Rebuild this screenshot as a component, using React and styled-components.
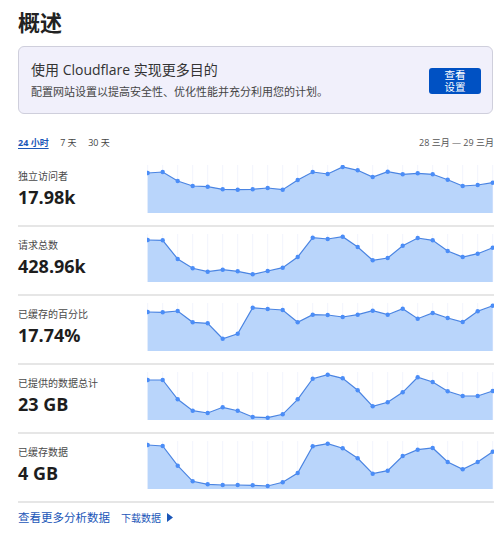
import React from 'react';
import styled, { createGlobalStyle } from 'styled-components';

const GlobalStyle = createGlobalStyle`
  body {
    margin: 0;
    padding: 0;
    background: #fff;
    font-family: "Open Sans", "Noto Sans CJK SC", sans-serif;
  }
`;

const Page = styled.div`
  width: 476px;
  padding: 8px 0 0 18px;
`;

const Title = styled.h1`
  margin: 0;
  font-size: 22px;
  line-height: 28px;
  font-weight: 700;
  color: #222;
`;

const Card = styled.div`
  display: flex;
  align-items: center;
  justify-content: space-between;
  box-sizing: border-box;
  width: 475px;
  height: 68px;
  margin-top: 10px;
  padding: 0 11px 0 12px;
  border: 1px solid #cfcfdc;
  border-radius: 6px;
  background-color: #f1f0fb;
`;

const CardText = styled.div`
  display: flex;
  flex-direction: column;
  gap: 4px;
`;

const CardHeading = styled.div`
  font-size: 14px;
  line-height: 20px;
  color: #333;
`;

const CardSub = styled.div`
  font-size: 11px;
  line-height: 16px;
  color: #444;
`;

const CardButton = styled.button`
  display: flex;
  flex-direction: column;
  align-items: center;
  justify-content: center;
  width: 52px;
  height: 26px;
  margin-top: 2px;
  padding: 0;
  border: none;
  border-radius: 3px;
  background-color: #0051c3;
  color: #fff;
  font-family: inherit;
  font-size: 10.5px;
  line-height: 12.5px;
`;

const Toolbar = styled.div`
  display: flex;
  align-items: center;
  justify-content: space-between;
  margin-top: 22px;
  height: 14px;
  line-height: 14px;
`;

const Tabs = styled.div`
  display: flex;
  gap: 11.5px;
`;

const Tab = styled.a`
  font-size: 9px;
  font-weight: ${(p) => (p.$active ? 700 : 400)};
  color: ${(p) => (p.$active ? '#1a56b8' : '#444')};
  text-decoration: ${(p) => (p.$active ? 'underline' : 'none')};
  text-underline-offset: 2px;
  cursor: pointer;
`;

const DateRange = styled.span`
  font-size: 9px;
  color: #555;
`;

const Rows = styled.div`
  margin-top: 8px;
`;

const Row = styled.div`
  display: grid;
  grid-template-columns: 129px 347px;
  height: 67px;
  border-bottom: 2px solid #e6e6e6;
`;

const Info = styled.div`
  display: flex;
  flex-direction: column;
  padding-top: 10px;
`;

const Label = styled.div`
  font-size: 10px;
  line-height: 16px;
  color: #4a4a4a;
`;

const Value = styled.div`
  margin-top: 1px;
  font-size: 18px;
  line-height: 24px;
  font-weight: 700;
  color: #1d1d1d;
`;

const ChartBox = styled.svg`
  display: block;
  margin-top: 7px;
`;

const Footer = styled.div`
  display: flex;
  align-items: center;
  gap: 11px;
  margin-top: 6px;
  height: 16px;
`;

const MoreLink = styled.a`
  font-size: 11.5px;
  color: #1a56b8;
  text-decoration: underline;
  text-underline-offset: 3px;
`;

const Download = styled.a`
  display: flex;
  align-items: center;
  gap: 6px;
  font-size: 10px;
  color: #1a56b8;
`;

const H = 48;

const Chart = ({ data }) => {
  const pts = data.map((h, i) => [0.7 + i * 15, H - h]);
  const line = pts.map((p) => p.join(',')).join(' ');
  const area = `0.7,${H} ${line} ${pts[pts.length - 1][0]},${H}`;
  return (
    <ChartBox width="347" height={H}>
      {pts.map(([x], i) => (
        <line key={i} x1={x} x2={x} y1="0" y2={H} stroke="#f2f4fd" strokeWidth="1" />
      ))}
      <polygon points={area} fill="#b9d5fb" />
      <polyline points={line} fill="none" stroke="#4a84e2" strokeWidth="1.2" />
      {pts.map(([x, y], i) => (
        <circle key={i} cx={x} cy={y} r="2.2" fill="#4b8df7" />
      ))}
    </ChartBox>
  );
};

const metrics = [
  {
    label: '独立访问者',
    value: '17.98k',
    data: [40, 41, 32, 27, 26.3, 23.7, 23.3, 23.7, 25, 23.3, 33, 41, 39, 46, 42.7, 36, 41.3, 38.7, 39.7, 38.7, 33.3, 27, 28, 30.3],
  },
  {
    label: '请求总数',
    value: '428.96k',
    data: [42, 41.7, 23, 13.7, 10.3, 12.3, 10.7, 7.7, 11, 14.3, 25, 44.3, 43, 45.3, 35, 21.7, 24, 36.3, 44, 41.7, 31, 25, 28.3, 34.3],
  },
  {
    label: '已缓存的百分比',
    value: '17.74%',
    data: [39, 38.7, 40, 28.7, 27.7, 12.3, 17.3, 43.3, 42, 41, 28.7, 36.3, 36, 34, 36.3, 40.3, 36.3, 42.3, 32.3, 38, 33, 29, 39.7, 45.3],
  },
  {
    label: '已提供的数据总计',
    value: '23 GB',
    data: [40, 40, 20.7, 9.3, 7, 12.7, 9.3, 3, 2.3, 5.7, 20.7, 41.3, 45.3, 41.7, 29.7, 13.7, 17.7, 27.7, 42.7, 38, 28.7, 24, 24, 29],
  },
  {
    label: '已缓存数据',
    value: '4 GB',
    data: [44, 43, 23.3, 7.7, 4.7, 4, 4, 3.7, 3, 6.7, 16, 42.7, 45.3, 40.7, 30.7, 15.3, 18.3, 33, 39.3, 41, 27, 19.7, 27, 37.3],
  },
];

const App = () => {
  return (
    <Page>
      <GlobalStyle />
      <Title>概述</Title>
      <Card>
        <CardText>
          <CardHeading>使用 Cloudflare 实现更多目的</CardHeading>
          <CardSub>配置网站设置以提高安全性、优化性能并充分利用您的计划。</CardSub>
        </CardText>
        <CardButton>
          <span>查看</span>
          <span>设置</span>
        </CardButton>
      </Card>
      <Toolbar>
        <Tabs>
          <Tab $active>24 小时</Tab>
          <Tab>7 天</Tab>
          <Tab>30 天</Tab>
        </Tabs>
        <DateRange>28 三月 — 29 三月</DateRange>
      </Toolbar>
      <Rows>
        {metrics.map((m) => (
          <Row key={m.label}>
            <Info>
              <Label>{m.label}</Label>
              <Value>{m.value}</Value>
            </Info>
            <Chart data={m.data} />
          </Row>
        ))}
      </Rows>
      <Footer>
        <MoreLink>查看更多分析数据</MoreLink>
        <Download>
          下载数据
          <svg width="6" height="9" viewBox="0 0 6 9">
            <polygon points="0,0 6,4.5 0,9" fill="#1a56b8" />
          </svg>
        </Download>
      </Footer>
    </Page>
  );
};

export default App;
